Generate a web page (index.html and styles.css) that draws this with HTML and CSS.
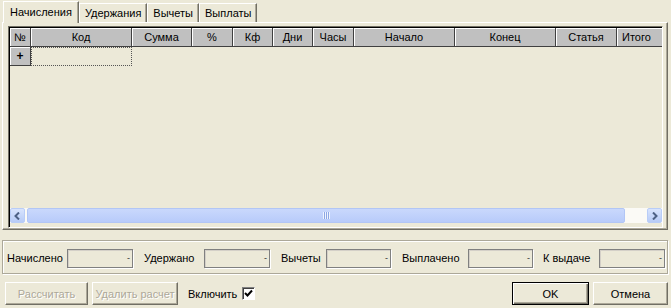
FILE: index.html
```html
<!DOCTYPE html>
<html lang="ru">

<head>
    <meta charset="UTF-8">
    <title>Расчет</title>
    <link rel="stylesheet" href="styles.css">
</head>

<body>
    <div class="window">
        <div class="tabs">
            <div class="tab active">Начисления</div>
            <div class="tab">Удержания</div>
            <div class="tab">Вычеты</div>
            <div class="tab">Выплаты</div>
        </div>

        <div class="panel">
            <div class="grid">
                <div class="grid-head">
                    <div class="hcell c-num">№</div>
                    <div class="hcell c-code">Код</div>
                    <div class="hcell c-sum">Сумма</div>
                    <div class="hcell c-pct">%</div>
                    <div class="hcell c-kf">Кф</div>
                    <div class="hcell c-days">Дни</div>
                    <div class="hcell c-hours">Часы</div>
                    <div class="hcell c-start">Начало</div>
                    <div class="hcell c-end">Конец</div>
                    <div class="hcell c-art">Статья</div>
                    <div class="hcell c-total">Итого</div>
                </div>
                <div class="grid-row">
                    <div class="hcell c-num marker">+</div>
                    <div class="cell c-code focus"></div>
                </div>
                <div class="grid-body"></div>
                <div class="hscroll">
                    <div class="sbtn">
                        <svg width="7" height="8" viewBox="0 0 7 8"><path d="M5 0.5 L1.5 4 L5 7.5" fill="none" stroke="#4d6185" stroke-width="2"/></svg>
                    </div>
                    <div class="thumb">
                        <span class="grip"></span>
                    </div>
                    <div class="track"></div>
                    <div class="sbtn">
                        <svg width="7" height="8" viewBox="0 0 7 8"><path d="M2 0.5 L5.5 4 L2 7.5" fill="none" stroke="#4d6185" stroke-width="2"/></svg>
                    </div>
                </div>
            </div>
        </div>

        <div class="totals">
            <label class="l-acc">Начислено</label>
            <div class="field"><span>-</span></div>
            <label class="l-ret">Удержано</label>
            <div class="field"><span>-</span></div>
            <label class="l-ded">Вычеты</label>
            <div class="field f-short"><span>-</span></div>
            <label class="l-paid">Выплачено</label>
            <div class="field f-short"><span>-</span></div>
            <label class="l-out">К выдаче</label>
            <div class="field"><span>-</span></div>
        </div>

        <div class="actions">
            <button class="btn calc" disabled>Рассчитать</button>
            <button class="btn del" disabled>Удалить расчет</button>
            <label class="check">Включить <span class="box">
                <svg width="9" height="9" viewBox="0 0 9 9"><path d="M1 4 L3.5 6.5 L8 1.5" fill="none" stroke="#000" stroke-width="2"/></svg>
            </span></label>
            <div class="spacer"></div>
            <button class="btn ok">OK</button>
            <button class="btn">Отмена</button>
        </div>
    </div>
</body>

</html>
```

FILE: styles.css
```css
body {
    margin: 0;
    background-color: #ece9d8;
    font-family: "Liberation Sans", Arial, sans-serif;
    font-size: 11px;
    color: #000;
}

.window {
    width: 671px;
    height: 308px;
    overflow: hidden;
}

/* tabs */
.tabs {
    display: flex;
    align-items: flex-end;
    height: 22px;
    padding-left: 3px;
    position: relative;
    z-index: 1;
}

.tab {
    height: 18px;
    line-height: 18px;
    padding: 0 5px;
    border-top: 1px solid #fff;
    border-left: 1px solid #fff;
    border-right: 1px solid #716f64;
    box-shadow: inset -1px 0 #aca899;
}

.tab.active {
    height: 21px;
    line-height: 20px;
    padding: 0 6px;
    margin-bottom: -1px;
    background-color: #ece9d8;
}

/* page */
.panel {
    margin: 0 3px 0 2px;
    height: 208px;
    border-top: 1px solid #fff;
    border-left: 1px solid #fff;
    border-right: 1px solid #716f64;
    border-bottom: 1px solid #716f64;
    box-shadow: inset -1px -1px #aca899;
    padding: 3px 4px 0 5px;
    box-sizing: border-box;
}

.grid {
    height: 202px;
    border-top: 1px solid #716f64;
    border-left: 1px solid #716f64;
    border-right: 1px solid #fff;
    border-bottom: 1px solid #fff;
    box-shadow: inset 1px 1px #000;
    display: flex;
    flex-direction: column;
    overflow: hidden;
    box-sizing: border-box;
    padding: 1px 0 2px 1px;
}

.grid-head,
.grid-row {
    display: flex;
    height: 19px;
    flex-shrink: 0;
}

.hcell {
    flex-shrink: 0;
    background-color: #c0c0c0;
    border-right: 1px solid #404040;
    border-bottom: 1px solid #404040;
    box-shadow: inset 1px 1px #fff;
    box-sizing: border-box;
    text-align: center;
    line-height: 18px;
    white-space: nowrap;
    overflow: hidden;
}

.cell {
    flex-shrink: 0;
    box-sizing: border-box;
}

.c-num { width: 21px; }
.c-code { width: 101px; }
.c-sum { width: 60px; }
.c-pct { width: 41px; }
.c-kf { width: 40px; }
.c-days { width: 40px; }
.c-hours { width: 41px; }
.c-start { width: 101px; }
.c-end { width: 101px; }
.c-art { width: 61px; }
.c-total { width: 60px; text-align: left; padding-left: 5px; }

.marker {
    font-weight: bold;
    font-size: 12px;
}

.focus {
    border: 1px dotted #555;
    background-color: #ece9d8;
}

.grid-body {
    flex: 1;
}

/* horizontal scrollbar */
.hscroll {
    display: flex;
    height: 15px;
    margin-bottom: 2px;
    background-color: #fbfaf6;
}

.sbtn {
    width: 15px;
    height: 15px;
    box-sizing: border-box;
    border: 1px solid #b9cdf7;
    border-radius: 2px;
    background: linear-gradient(#d8e4fd, #b7cbf7);
    display: flex;
    align-items: center;
    justify-content: center;
}

.thumb {
    width: 598px;
    margin-left: 2px;
    box-sizing: border-box;
    border: 1px solid #b2c6f5;
    border-radius: 2px;
    background: linear-gradient(#c9d8fc, #b8cbfa);
    display: flex;
    align-items: center;
    justify-content: center;
}

.grip {
    width: 7px;
    height: 7px;
    background: repeating-linear-gradient(90deg, #eef3fe 0 1px, #8da7e4 1px 2px);
}

.track {
    flex: 1;
}

/* totals */
.totals {
    margin: 10px 3px 0 2px;
    height: 34px;
    border: 1px solid #aca899;
    box-shadow: inset 1px 1px #fff, 1px 1px #fff;
    display: flex;
    align-items: center;
    padding: 2px 0 0 4px;
    box-sizing: border-box;
}

.totals label {
    flex-shrink: 0;
}

.l-acc { width: 60px; }
.l-ret { width: 60px; }
.l-ded { width: 45px; }
.l-paid { width: 66px; }
.l-out { width: 56px; }

.field {
    width: 66px;
    height: 19px;
    margin-right: 11px;
    box-sizing: border-box;
    border: 1px solid #808080;
    box-shadow: inset 1px 1px #d4d0c8, 1px 1px #fff;
    display: flex;
    align-items: center;
    justify-content: flex-end;
    padding-right: 2px;
    font-size: 9px;
    color: #333;
}

.field.f-short {
    width: 65px;
}

.totals .l-paid + .field {
    margin-right: 10px;
}

.totals .field:last-child {
    margin-right: 0;
}

/* buttons */
.actions {
    display: flex;
    align-items: center;
    margin-top: 8px;
    padding: 0 3px 0 5px;
}

.btn {
    height: 23px;
    font-family: inherit;
    font-size: 11px;
    background-color: #ece9d8;
    border-top: 1px solid #fff;
    border-left: 1px solid #fff;
    border-right: 1px solid #716f64;
    border-bottom: 1px solid #716f64;
    box-shadow: inset -1px -1px #aca899;
    padding: 0;
    color: #000;
}

.btn:disabled {
    color: #aca899;
    text-shadow: 1px 1px #fff;
}

.calc { width: 83px; }
.del { width: 86px; margin-left: 4px; }

.check {
    display: flex;
    align-items: center;
    margin-left: 10px;
}

.box {
    width: 13px;
    height: 13px;
    margin-left: 5px;
    box-sizing: border-box;
    background-color: #fff;
    border-top: 1px solid #808080;
    border-left: 1px solid #808080;
    border-right: 1px solid #fff;
    border-bottom: 1px solid #fff;
    box-shadow: inset 1px 1px #404040;
    display: flex;
    align-items: center;
    justify-content: center;
}

.spacer {
    flex: 1;
}

.ok {
    width: 77px;
    border: 1px solid #000;
    box-shadow: inset 1px 1px #fff, inset -1px -1px #716f64, inset -2px -2px #aca899;
}

.ok + .btn {
    width: 75px;
    margin-left: 4px;
}
```
